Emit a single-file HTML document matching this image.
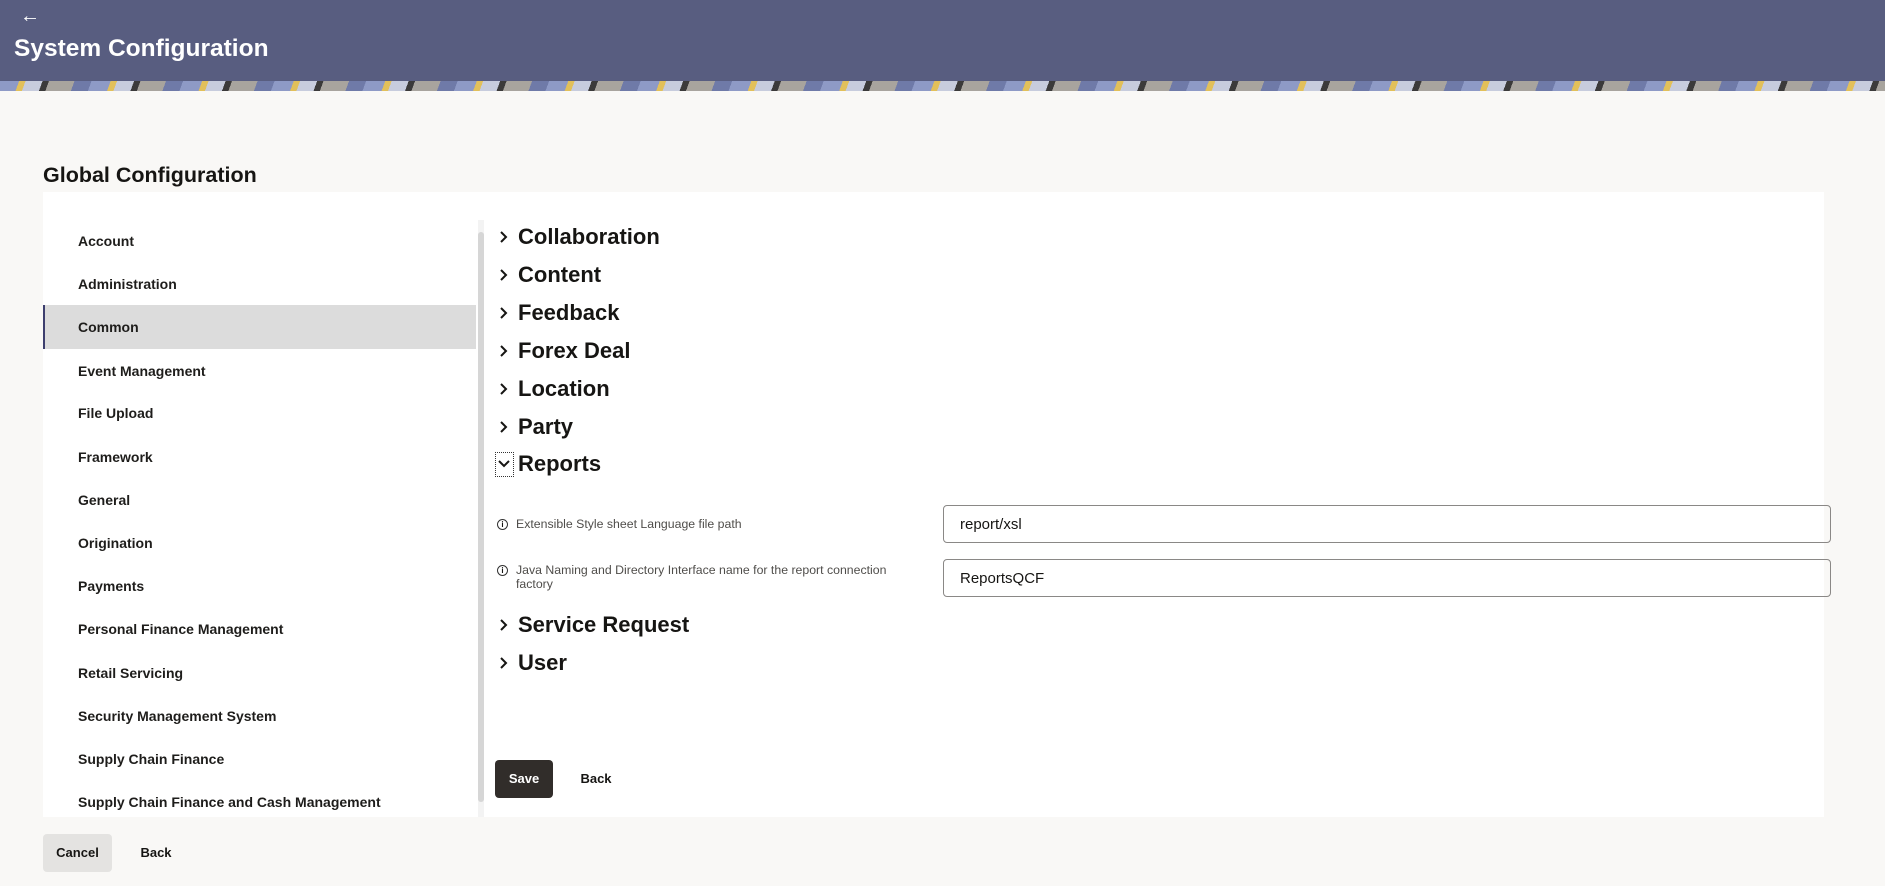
<!DOCTYPE html>
<html><head><style>
*{box-sizing:border-box;margin:0;padding:0}
body{width:1885px;height:886px;background:#f9f8f6;font-family:"Liberation Sans",sans-serif;color:#161513;position:relative;overflow:hidden}
.hdr{position:absolute;left:0;top:0;width:1885px;height:81px;background:#585d80}
.banner{position:absolute;left:0;top:81px;width:1885px;height:10px;background:repeating-linear-gradient(110deg,#8e9ac6 0 18px,#e2c05a 18px 24px,#c7ccdd 24px 40px,#3b3a3a 40px 46px,#a8a49e 46px 70px,#6f7aa8 70px 86px)}
.arrow{position:absolute;left:20px;top:5px;color:#fff;font-size:20px;font-weight:bold}
.title{position:absolute;left:14px;top:35px;color:#fff;font-size:24.5px;font-weight:bold}
.gc{position:absolute;left:43px;top:163px;font-size:21.5px;font-weight:bold}
.panel{position:absolute;left:43px;top:192px;width:1781px;height:625px;background:#fff}
.li{position:absolute;left:78px;font-size:14px;font-weight:bold;color:#1e1d1b;margin-top:1px}
.sel{position:absolute;left:43px;top:305px;width:433px;height:44px;background:#dcdcdc;border-left:2px solid #3d3f6e}
.sb{position:absolute;left:478px;top:220px;width:6px;height:597px;background:#f3f3f3}
.sbt{position:absolute;left:478px;top:232px;width:6px;height:570px;background:#d6d6d6;border-radius:3px}
.sec{position:absolute;left:518px;font-size:22px;font-weight:bold}
.chev{position:absolute;left:496px;width:14px;height:14px}
.lbl{position:absolute;left:516px;font-size:12.3px;color:#4f4d4a;line-height:14px}
.info{position:absolute;left:497px;width:11px;height:11px;border:1.3px solid #333;border-radius:50%;font-size:8px;text-align:center;line-height:9px;font-weight:bold}
.inp{position:absolute;left:943px;width:888px;height:38px;border:1px solid #8a8886;border-radius:4px;font-size:15px;padding:10px 16px}
.btn{position:absolute;font-size:13px;font-weight:bold;text-align:center}
</style></head><body>
<div class="hdr"></div><div class="banner"></div>
<div class="arrow">←</div>
<div class="title">System Configuration</div>
<div class="gc">Global Configuration</div>
<div class="panel"></div>
<div class="sel"></div>
<div class="li" style="top:232px">Account</div>
<div class="li" style="top:275px">Administration</div>
<div class="li" style="top:318px">Common</div>
<div class="li" style="top:362px">Event Management</div>
<div class="li" style="top:404px">File Upload</div>
<div class="li" style="top:448px">Framework</div>
<div class="li" style="top:491px">General</div>
<div class="li" style="top:534px">Origination</div>
<div class="li" style="top:577px">Payments</div>
<div class="li" style="top:620px">Personal Finance Management</div>
<div class="li" style="top:664px">Retail Servicing</div>
<div class="li" style="top:707px">Security Management System</div>
<div class="li" style="top:750px">Supply Chain Finance</div>
<div class="li" style="top:793px">Supply Chain Finance and Cash Management</div>
<div class="sb"></div><div class="sbt"></div>

<svg class="chev" style="top:230px" viewBox="0 0 14 14"><path d="M5 2l5 5-5 5" fill="none" stroke="#161513" stroke-width="2"/></svg>
<div class="sec" style="top:224px">Collaboration</div>
<svg class="chev" style="top:268px" viewBox="0 0 14 14"><path d="M5 2l5 5-5 5" fill="none" stroke="#161513" stroke-width="2"/></svg>
<div class="sec" style="top:262px">Content</div>
<svg class="chev" style="top:306px" viewBox="0 0 14 14"><path d="M5 2l5 5-5 5" fill="none" stroke="#161513" stroke-width="2"/></svg>
<div class="sec" style="top:300px">Feedback</div>
<svg class="chev" style="top:344px" viewBox="0 0 14 14"><path d="M5 2l5 5-5 5" fill="none" stroke="#161513" stroke-width="2"/></svg>
<div class="sec" style="top:338px">Forex Deal</div>
<svg class="chev" style="top:382px" viewBox="0 0 14 14"><path d="M5 2l5 5-5 5" fill="none" stroke="#161513" stroke-width="2"/></svg>
<div class="sec" style="top:376px">Location</div>
<svg class="chev" style="top:420px" viewBox="0 0 14 14"><path d="M5 2l5 5-5 5" fill="none" stroke="#161513" stroke-width="2"/></svg>
<div class="sec" style="top:414px">Party</div>
<div style="position:absolute;left:495px;top:452px;width:19px;height:25px;border:1px dotted #333"></div>
<svg class="chev" style="top:456px;left:497px" viewBox="0 0 14 14"><path d="M2 5l5 5 5-5" fill="none" stroke="#161513" stroke-width="2"/></svg>
<div class="sec" style="top:451px">Reports</div>

<div class="info" style="top:519px">i</div>
<div class="lbl" style="top:517px">Extensible Style sheet Language file path</div>
<div class="inp" style="top:505px">report/xsl</div>
<div class="info" style="top:565px">i</div>
<div class="lbl" style="top:563px">Java Naming and Directory Interface name for the report connection<br>factory</div>
<div class="inp" style="top:559px">ReportsQCF</div>

<svg class="chev" style="top:618px" viewBox="0 0 14 14"><path d="M5 2l5 5-5 5" fill="none" stroke="#161513" stroke-width="2"/></svg>
<div class="sec" style="top:612px">Service Request</div>
<svg class="chev" style="top:656px" viewBox="0 0 14 14"><path d="M5 2l5 5-5 5" fill="none" stroke="#161513" stroke-width="2"/></svg>
<div class="sec" style="top:650px">User</div>

<div class="btn" style="left:495px;top:760px;width:58px;height:38px;line-height:38px;background:#312d2a;color:#fff;border-radius:4px">Save</div>
<div class="btn" style="left:574px;top:760px;width:44px;height:38px;line-height:38px">Back</div>
<div class="btn" style="left:43px;top:834px;width:69px;height:38px;line-height:38px;background:#e4e3e1;border-radius:4px">Cancel</div>
<div class="btn" style="left:134px;top:834px;width:44px;height:38px;line-height:38px">Back</div>
</body></html>
